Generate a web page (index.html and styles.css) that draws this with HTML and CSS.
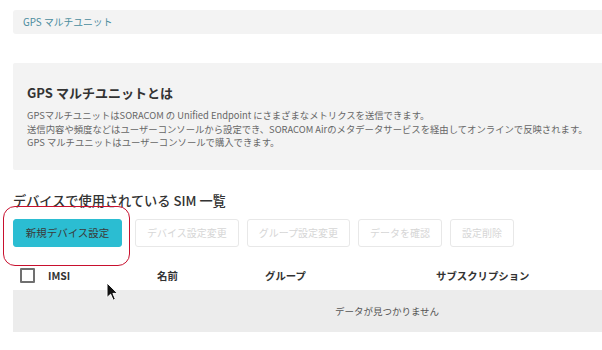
FILE: index.html
```html
<!DOCTYPE html>
<html lang="ja">
<head>
    <meta charset="UTF-8">
    <meta name="viewport" content="width=device-width, initial-scale=1.0">
    <title>GPS マルチユニット</title>
    <link rel="stylesheet" href="styles.css">
</head>
<body>

    <div class="page">
        <!-- パンくず -->
        <div class="breadcrumb">GPS マルチユニット</div>

        <!-- 説明 -->
        <div class="info">
            <h2>GPS マルチユニットとは</h2>
            <p>GPSマルチユニットはSORACOM の Unified Endpoint にさまざまなメトリクスを送信できます。</p>
            <p>送信内容や頻度などはユーザーコンソールから設定でき、SORACOM Airのメタデータサービスを経由してオンラインで反映されます。</p>
            <p>GPS マルチユニットはユーザーコンソールで購入できます。</p>
        </div>

        <h3 class="section-title">デバイスで使用されている SIM 一覧</h3>

        <div class="toolbar">
            <button class="btn btn-primary">新規デバイス設定</button>
            <div class="btn-group">
                <button class="btn" disabled>デバイス設定変更</button>
                <button class="btn" disabled>グループ設定変更</button>
                <button class="btn" disabled>データを確認</button>
                <button class="btn" disabled>設定削除</button>
            </div>
            <div class="highlight"></div>
        </div>

        <div class="table">
            <div class="table-head">
                <div class="cell"><span class="checkbox"></span></div>
                <div class="cell">IMSI</div>
                <div class="cell">名前</div>
                <div class="cell">グループ</div>
                <div class="cell">サブスクリプション</div>
            </div>
            <div class="table-empty">データが見つかりません</div>
            <svg class="cursor" width="13" height="20" viewBox="0 0 13 20">
                <path d="M1 1 L1 15.5 L4.6 12.2 L7.2 18.2 L9.4 17.2 L6.9 11.4 L11.6 11.4 Z" fill="#111" stroke="#fff" stroke-width="1" stroke-linejoin="round"/>
            </svg>
        </div>
    </div>

</body>
</html>
```

FILE: styles.css
```css
/* Estilos generales */
body {
    margin: 0;
    background: #fff;
    font-family: "Noto Sans CJK JP", "Noto Sans", sans-serif;
    color: #333;
    overflow: hidden;
}

.page {
    width: 748px;
    padding: 10px 0 0 13px;
}

/* パンくず */
.breadcrumb {
    height: 24px;
    line-height: 24px;
    padding-left: 10px;
    background: #f3f3f3;
    border-radius: 3px;
    font-size: 9.8px;
    color: #4a8c9e;
}

/* 説明ボックス */
.info {
    margin-top: 29px;
    padding: 20px 14px 20px;
    background: #f3f3f3;
    border-radius: 2px;
}
.info h2 {
    margin: 0 0 6px;
    font-size: 13px;
    line-height: 20px;
    font-weight: bold;
    color: #333;
}
.info p {
    margin: 0;
    font-size: 9.35px;
    line-height: 13.5px;
    color: #666;
}

.section-title {
    margin: 21px 0 8px;
    font-size: 13.2px;
    line-height: 20px;
    font-weight: 500;
    color: #333;
}

/* ボタン */
.toolbar {
    position: relative;
    display: flex;
    gap: 13px;
}
.btn-group {
    display: flex;
    gap: 8px;
}
.btn {
    height: 28px;
    padding: 0 11px;
    border: 1px solid #e8e8e8;
    border-radius: 3px;
    background: #fff;
    font-family: inherit;
    font-size: 10px;
    color: #d6d6d6;
}
.btn-primary {
    width: 109px;
    padding: 0;
    border-color: #2bbdd2;
    background: #2bbdd2;
    font-size: 10.5px;
    color: #3a3a3a;
    cursor: pointer;
}

/* 赤い枠 */
.highlight {
    position: absolute;
    left: -10px;
    top: -13px;
    width: 125px;
    height: 58px;
    border: 1.5px solid #c8102e;
    border-radius: 12px;
    pointer-events: none;
}

/* テーブル */
.table {
    position: relative;
    margin-top: 15px;
}
.table-head {
    display: grid;
    grid-template-columns: 35px 109px 108px 171px 1fr;
    height: 28px;
    align-items: center;
    font-size: 10.4px;
    font-weight: bold;
    color: #333;
}
.cell:first-child {
    padding-left: 7px;
}
.checkbox {
    display: block;
    width: 11px;
    height: 11px;
    border: 2px solid #707070;
    border-radius: 1px;
}
.table-empty {
    height: 42px;
    line-height: 42px;
    background: #ececec;
    text-align: center;
    font-size: 9.5px;
    color: #555;
}
.cursor {
    position: absolute;
    left: 93px;
    top: 20px;
}
```
